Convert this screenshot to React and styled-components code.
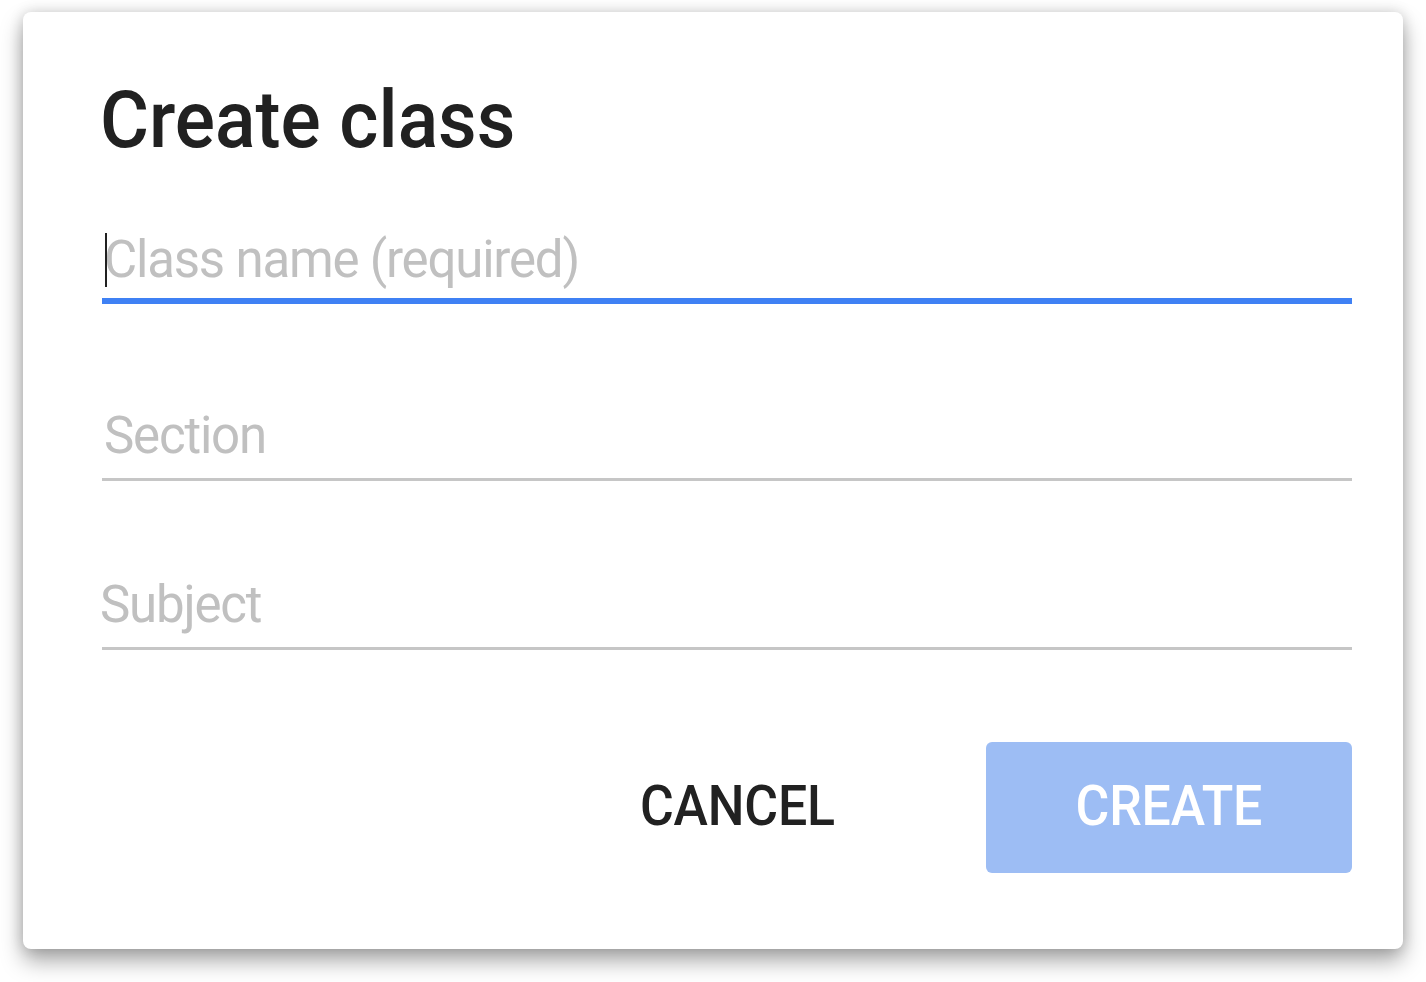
import React from 'react';
import styled, { createGlobalStyle } from 'styled-components';

const GlobalStyle = createGlobalStyle`
  html, body {
    margin: 0;
    padding: 0;
    background: #ffffff;
    font-family: Roboto, "Liberation Sans", Arial, sans-serif;
  }
`;

const Page = styled.div`
  padding: 12px 23px 34px 23px;
  width: 1380px;
`;

const Dialog = styled.div`
  background: #ffffff;
  border-radius: 8px;
  padding: 68px 51px 76px 79px;
  box-shadow: 0 12px 22px rgba(0, 0, 0, 0.34), 0 0 14px rgba(0, 0, 0, 0.16);
`;

const Title = styled.h1`
  margin: 0;
  font-size: 79px;
  line-height: 80px;
  font-weight: 500;
  color: #212121;
`;

// the source renders the type a little narrower than stock Roboto
const Narrow = styled.span`
  display: inline-block;
  transform: scaleX(${(p) => p.$x});
  transform-origin: ${(p) => p.$origin || 'center'};
  margin-left: ${(p) => p.$shift || 0}px;
`;

const Field = styled.div`
  position: relative;
  margin-top: ${(p) => p.$gap}px;
  padding-bottom: ${(p) => (p.$focused ? 8 : 12)}px;
  border-bottom: ${(p) => (p.$focused ? '6px solid #3f81f4' : '3px solid #c6c6c6')};
`;

const Input = styled.input`
  display: block;
  width: 100%;
  box-sizing: border-box;
  height: 60px;
  border: none;
  outline: none;
  background: transparent;
  padding: 0;
  text-indent: ${(p) => p.$indent}px;
  font-family: Roboto, "Liberation Sans", Arial, sans-serif;
  font-size: 51px;
  line-height: 60px;
  letter-spacing: -1.2px;
  color: #212121;

  &::placeholder {
    color: #c0c0c0;
    opacity: 1;
  }
`;

const Caret = styled.span`
  position: absolute;
  left: 3px;
  top: 3px;
  width: 2px;
  height: 54px;
  background: #212121;
`;

const Actions = styled.div`
  display: flex;
  justify-content: flex-end;
  align-items: center;
  gap: 66px;
  margin-top: 92px;
`;

const Button = styled.button`
  width: 366px;
  height: 131px;
  border: none;
  border-radius: 6px;
  background: ${(p) => (p.$primary ? '#9dbdf4' : 'transparent')};
  color: ${(p) => (p.$primary ? '#ffffff' : '#212121')};
  font-family: Roboto, "Liberation Sans", Arial, sans-serif;
  font-size: 56px;
  font-weight: 500;
  letter-spacing: -0.2px;
  cursor: pointer;
  padding: 0 0 4px 0;
`;

export default function App() {
  return (
    <>
      <GlobalStyle />
      <Page>
        <Dialog>
          <Title>
            <Narrow $x={0.95} $origin="left" $shift={-2}>Create class</Narrow>
          </Title>
          <Field $gap={70} $focused>
            <Caret />
            <Input $indent={2} placeholder="Class name (required)" />
          </Field>
          <Field $gap={102}>
            <Input $indent={2} placeholder="Section" />
          </Field>
          <Field $gap={94}>
            <Input $indent={-2} placeholder="Subject" />
          </Field>
          <Actions>
            <Button>
              <Narrow $x={0.925}>CANCEL</Narrow>
            </Button>
            <Button $primary>
              <Narrow $x={0.925}>CREATE</Narrow>
            </Button>
          </Actions>
        </Dialog>
      </Page>
    </>
  );
}
